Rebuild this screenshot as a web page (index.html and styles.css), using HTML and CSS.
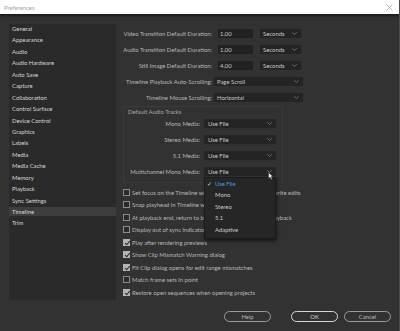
FILE: index.html
```html
<!DOCTYPE html>
<html lang="en">
<head>
<meta charset="UTF-8" />
<title>Preferences</title>
<link rel="stylesheet" href="styles.css">
</head>
<body>
  <div class="titlebar">
    <span class="title">Preferences</span>
    <svg class="close" width="7" height="7" viewBox="0 0 7 7"><path d="M0.5 0.5L6.5 6.5M6.5 0.5L0.5 6.5" stroke="#a8a8a8" stroke-width="0.8"/></svg>
  </div>

  <div class="main">
    <ul class="sidebar">
      <li>General</li>
      <li>Appearance</li>
      <li>Audio</li>
      <li>Audio Hardware</li>
      <li>Auto Save</li>
      <li>Capture</li>
      <li>Collaboration</li>
      <li>Control Surface</li>
      <li>Device Control</li>
      <li>Graphics</li>
      <li>Labels</li>
      <li>Media</li>
      <li>Media Cache</li>
      <li>Memory</li>
      <li>Playback</li>
      <li>Sync Settings</li>
      <li class="selected">Timeline</li>
      <li>Trim</li>
    </ul>

    <div class="panel">
      <div class="row">
        <label class="lbl">Video Transition Default Duration:</label>
        <div class="field">1,00</div>
        <div class="select units">Seconds<svg class="chev" width="5" height="3" viewBox="0 0 5 3"><path d="M0.3 0.3L2.5 2.5L4.7 0.3" fill="none" stroke="#8a8a8a" stroke-width="0.7"/></svg></div>
      </div>
      <div class="row">
        <label class="lbl">Audio Transition Default Duration:</label>
        <div class="field">1,00</div>
        <div class="select units">Seconds<svg class="chev" width="5" height="3" viewBox="0 0 5 3"><path d="M0.3 0.3L2.5 2.5L4.7 0.3" fill="none" stroke="#8a8a8a" stroke-width="0.7"/></svg></div>
      </div>
      <div class="row">
        <label class="lbl">Still Image Default Duration:</label>
        <div class="field">4,00</div>
        <div class="select units">Seconds<svg class="chev" width="5" height="3" viewBox="0 0 5 3"><path d="M0.3 0.3L2.5 2.5L4.7 0.3" fill="none" stroke="#8a8a8a" stroke-width="0.7"/></svg></div>
      </div>
      <div class="row">
        <label class="lbl lbl-wide">Timeline Playback Auto-Scrolling:</label>
        <div class="select wide">Page Scroll<svg class="chev" width="5" height="3" viewBox="0 0 5 3"><path d="M0.3 0.3L2.5 2.5L4.7 0.3" fill="none" stroke="#8a8a8a" stroke-width="0.7"/></svg></div>
      </div>
      <div class="row">
        <label class="lbl lbl-wide">Timeline Mouse Scrolling:</label>
        <div class="select wide">Horizontal<svg class="chev" width="5" height="3" viewBox="0 0 5 3"><path d="M0.3 0.3L2.5 2.5L4.7 0.3" fill="none" stroke="#8a8a8a" stroke-width="0.7"/></svg></div>
      </div>

      <div class="group">
        <div class="group-title">Default Audio Tracks</div>
        <div class="grow">
          <label class="glbl">Mono Media:</label>
          <div class="select track">Use File<svg class="chev" width="5" height="3" viewBox="0 0 5 3"><path d="M0.3 0.3L2.5 2.5L4.7 0.3" fill="none" stroke="#8a8a8a" stroke-width="0.7"/></svg></div>
        </div>
        <div class="grow">
          <label class="glbl">Stereo Media:</label>
          <div class="select track">Use File<svg class="chev" width="5" height="3" viewBox="0 0 5 3"><path d="M0.3 0.3L2.5 2.5L4.7 0.3" fill="none" stroke="#8a8a8a" stroke-width="0.7"/></svg></div>
        </div>
        <div class="grow">
          <label class="glbl">5.1 Media:</label>
          <div class="select track">Use File<svg class="chev" width="5" height="3" viewBox="0 0 5 3"><path d="M0.3 0.3L2.5 2.5L4.7 0.3" fill="none" stroke="#8a8a8a" stroke-width="0.7"/></svg></div>
        </div>
        <div class="grow">
          <label class="glbl">Multichannel Mono Media:</label>
          <div class="select track open">Use File<svg class="chev" width="5" height="3" viewBox="0 0 5 3"><path d="M0.3 0.3L2.5 2.5L4.7 0.3" fill="none" stroke="#8a8a8a" stroke-width="0.7"/></svg>
            <svg class="cursor" width="6" height="8" viewBox="0 0 6 8"><path d="M0.5 0.5L0.5 6.5L2 5.2L3.2 7.5L4.2 7L3.1 4.8L5.2 4.8Z" fill="#f2f2f2" stroke="#222" stroke-width="0.5"/></svg>
            <ul class="menu">
              <li class="current"><span class="tick">&#10003;</span>Use File</li>
              <li>Mono</li>
              <li>Stereo</li>
              <li>5.1</li>
              <li>Adaptive</li>
            </ul>
          </div>
        </div>
      </div>

      <ul class="checks">
        <li><span class="box"></span>Set focus on the Timeline when performing insert/overwrite edits</li>
        <li><span class="box"></span>Snap playhead in Timeline when snapping is enabled</li>
        <li><span class="box"></span>At playback end, return to beginning when restarting playback</li>
        <li><span class="box"></span>Display out of sync indicators for unlinked clips</li>
        <li><span class="box on"></span>Play after rendering previews</li>
        <li><span class="box on"></span>Show Clip Mismatch Warning dialog</li>
        <li><span class="box on"></span>Fit Clip dialog opens for edit range mismatches</li>
        <li><span class="box"></span>Match frame sets in point</li>
        <li><span class="box on"></span>Restore open sequences when opening projects</li>
      </ul>
    </div>
  </div>

  <div class="buttons">
    <button class="help">Help</button>
    <button class="ok">OK</button>
    <button>Cancel</button>
  </div>
</body>
</html>
```

FILE: styles.css
```css
/* Base */
* {
  box-sizing: border-box;
}
body {
  margin: 0;
  width: 400px;
  height: 331px;
  background: #323232;
  font-family: Lato, 'Noto Sans', sans-serif;
  font-size: 5.9px;
  color: #b8b8b8;
  overflow: hidden;
  border-right: 1px solid #4a4a4a;
}
ul {
  list-style: none;
  margin: 0;
  padding: 0;
}

/* Title bar */
.titlebar {
  height: 15px;
  background: #fff;
  display: flex;
  align-items: center;
  justify-content: space-between;
  padding: 0 6px 0 4px;
  border-bottom: 1px solid #1c1c1c;
  box-shadow: 0 1px 2px rgba(0, 0, 0, 0.5);
}
.title {
  color: #a4a4a4;
  font-size: 5.9px;
}

/* Main area */
.main {
  display: flex;
  padding: 9px 0 0 9px;
}
.sidebar {
  width: 107px;
  height: 276px;
  background: #2a2a2a;
}
.sidebar li {
  height: 9px;
  line-height: 9px;
  margin-bottom: 2.45px;
  padding-left: 3px;
  color: #d6d6d6;
}
.sidebar li.selected {
  background: #3e3e3e;
}

/* Right panel */
.panel {
  margin-left: 7px;
  width: 270px;
  padding-top: 1px;
}
.row {
  display: flex;
  align-items: center;
  height: 16px;
}
.lbl {
  width: 89px;
  text-align: right;
  margin-right: 6px;
  white-space: nowrap;
}
.lbl-wide {
  margin-right: 2px;
}
.field {
  width: 35px;
  height: 9px;
  line-height: 9px;
  background: #212121;
  padding-left: 2px;
  color: #c8c8c8;
  margin-right: 7px;
}
.select {
  position: relative;
  height: 9px;
  line-height: 9px;
  background: #242424;
  color: #c8c8c8;
  padding-left: 3px;
}
.chev {
  position: absolute;
  right: 4px;
  top: 3px;
}
.units {
  width: 41px;
}
.wide {
  width: 89px;
}

/* Group box */
.group {
  margin-top: 1px;
  width: 160px;
  height: 77px;
  border: 1px solid #3b3b3b;
  padding-top: 1px;
}
.group-title {
  height: 8px;
  line-height: 8px;
  padding-left: 4px;
  color: #a8a8a8;
}
.grow {
  display: flex;
  align-items: center;
  height: 15.8px;
}
.glbl {
  width: 76px;
  text-align: right;
  margin-right: 4px;
  white-space: nowrap;
}
.track {
  width: 72px;
  padding-left: 4px;
}

/* Open dropdown menu */
.cursor {
  position: absolute;
  right: 2px;
  top: 5px;
  z-index: 3;
}
.menu {
  position: absolute;
  left: 0;
  top: 10px;
  width: 72px;
  height: 62px;
  background: #262626;
  border: 1px solid #1b1b1b;
  box-shadow: 1px 2px 3px rgba(0, 0, 0, 0.55);
  z-index: 2;
}
.menu li {
  position: relative;
  height: 11.5px;
  line-height: 11.5px;
  padding-left: 10px;
  color: #c8c8c8;
}
.menu li.current {
  color: #3d9be0;
}
.tick {
  position: absolute;
  left: 2px;
  color: #d8d8d8;
  font-size: 6px;
}

/* Checkboxes */
.checks {
  margin-top: 3px;
}
.checks li {
  display: flex;
  align-items: center;
  height: 12.5px;
  white-space: nowrap;
}
.box {
  width: 7px;
  height: 7px;
  border: 1px solid #8c8c8c;
  background: #2a2a2a;
  margin-right: 2px;
  position: relative;
}
.box.on {
  background: #b4b4b4;
  border-color: #b4b4b4;
}
.box.on::after {
  content: '';
  position: absolute;
  left: 1.5px;
  top: 0;
  width: 2px;
  height: 3.5px;
  border: solid #2a2a2a;
  border-width: 0 1px 1px 0;
  transform: rotate(40deg);
}

/* Bottom buttons */
.buttons {
  display: flex;
  justify-content: flex-end;
  padding: 11px 8px 0 0;
}
.buttons button {
  width: 47px;
  height: 11px;
  padding: 0;
  border: 1px solid #9c9c9c;
  border-radius: 6px;
  background: transparent;
  color: #b8b8b8;
  font-family: Lato, 'Noto Sans', sans-serif;
  font-size: 5.9px;
  line-height: 9px;
  margin-left: 6px;
}
.buttons .help {
  margin-right: 14px;
}
.buttons .ok {
  border-color: #d8d8d8;
  color: #d0d0d0;
}
```
